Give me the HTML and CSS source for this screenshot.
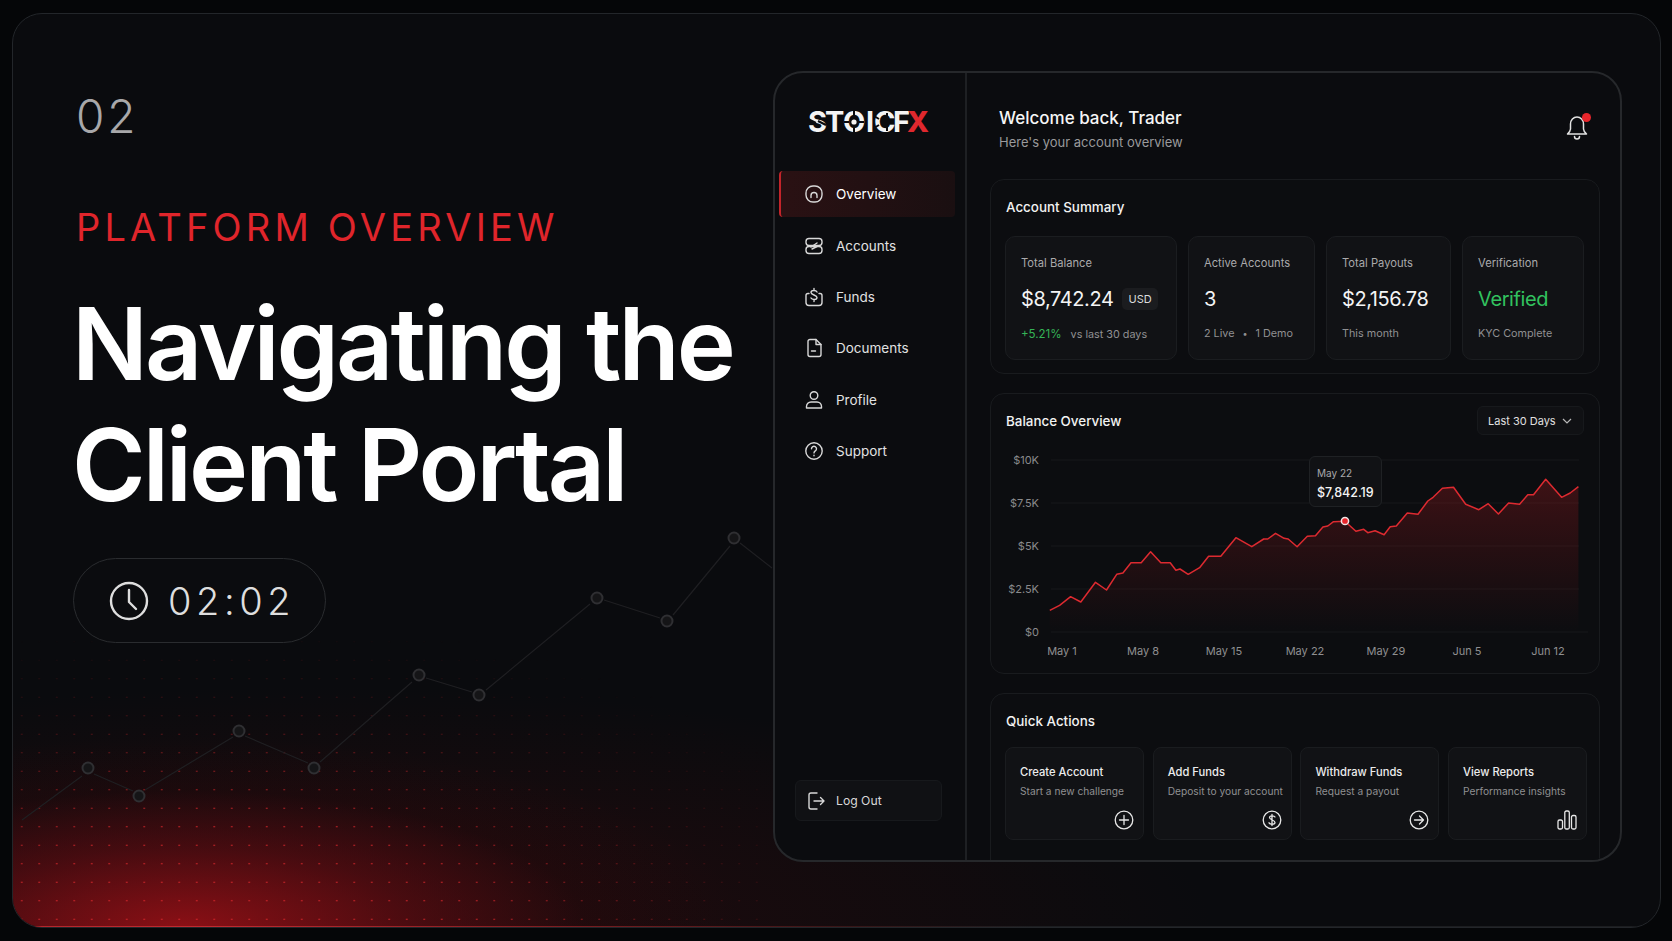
FILE: index.html
```html
<!DOCTYPE html>
<html lang="en">
<head>
<meta charset="utf-8">
<title>Platform Overview</title>
<link rel="stylesheet" href="styles.css">
</head>
<body>
<div class="frame">
  <div class="glow"></div>
  <div class="dots"></div>
  <div class="edge"></div>
  <svg class="decor" width="800" height="500" viewBox="0 450 800 500">
    <path class="decor-line" d="M22 820L82 776M94 774L133 791M145 790L233 737M245 736L308 763M320 762L412 682M426 678L472 692M486 690L590 604M604 600L660 618M673 615L730 546M740 543L772 568"/>
    <g class="decor-node">
      <circle cx="88" cy="768" r="5.5"/><circle cx="139" cy="796" r="5.5"/><circle cx="239" cy="731" r="5.5"/><circle cx="314" cy="768" r="5.5"/><circle cx="419" cy="675" r="5.5"/><circle cx="479" cy="695" r="5.5"/><circle cx="597" cy="598" r="5.5"/><circle cx="667" cy="621" r="5.5"/><circle cx="734" cy="538" r="5.5"/>
    </g>
  </svg>

  <section class="intro">
    <div class="num">02</div>
    <div class="kicker">PLATFORM OVERVIEW</div>
    <h1 class="headline">Navigating the<br>Client Portal</h1>
    <div class="pill">
      <svg class="pill-icon" width="40" height="40" viewBox="0 0 40 40"><circle cx="20" cy="20" r="18"/><path d="M20 9v12l7 7"/></svg>
      <span>02:02</span>
    </div>
  </section>

  <section class="panel">
    <aside class="sidebar">
      <svg class="logo" width="122" height="24" viewBox="0 0 122 24">
        <text class="logo-w" x="0 17 35 58 66 85" y="22">STOICF</text>
        <text class="logo-r" x="99" y="22">X</text>
        <g class="logo-cut">
          <path d="M0 9L8 13M10 11L18 15"/>
          <path d="M46 1V6M46 18V23M36 12H41M51 12H56"/>
          <path d="M66 6L71 9M66 18L71 15M79 3V8M79 16V21"/>
        </g>
        <circle class="logo-dot" cx="46" cy="12" r="2.6"/>
      </svg>
      <nav class="nav">
        <a class="nav-item active"><svg class="ico" viewBox="0 0 20 20"><rect x="2" y="2" width="16" height="16" rx="7"/><path d="M7 13.500v-2a3 3 0 0 1 6 0v2"/></svg>Overview</a>
        <a class="nav-item"><svg class="ico" viewBox="0 0 20 20"><rect x="2" y="2.500" width="16" height="7" rx="3"/><rect x="2" y="10.500" width="16" height="7" rx="3"/><path d="M7 11l6-4M8 13l5-2.500"/></svg>Accounts</a>
        <a class="nav-item"><svg class="ico" viewBox="0 0 20 20"><path d="M5 6.500H4a2 2 0 0 0-2 2v7a3 3 0 0 0 3 3h10a3 3 0 0 0 3-3v-7a2 2 0 0 0-2-2h-1"/><path d="M13 5c-1-2-6-2-6 .500S13 8 13 10.500 8 13 7 11M10 1.500v2M10 12.500v2"/></svg>Funds</a>
        <a class="nav-item"><svg class="ico" viewBox="0 0 20 20"><path d="M4 3.500a2 2 0 0 1 2-2h6l5 5v10a2 2 0 0 1-2 2H6a2 2 0 0 1-2-2z"/><path d="M12 1.500v5h5M7.500 13h4"/></svg>Documents</a>
        <a class="nav-item"><svg class="ico" viewBox="0 0 20 20"><circle cx="10" cy="5.500" r="3.800"/><path d="M2.500 18v-1.500a4.500 4.500 0 0 1 4.500-4.500h6a4.500 4.500 0 0 1 4.500 4.500V18z"/></svg>Profile</a>
        <a class="nav-item"><svg class="ico" viewBox="0 0 20 20"><circle cx="10" cy="10" r="8.200"/><path d="M7.500 7.800a2.500 2.500 0 1 1 3.800 2.100c-.9.600-1.300 1-1.300 2M10 14.300v.4"/></svg>Support</a>
      </nav>
      <a class="logout"><svg class="ico" viewBox="0 0 20 20"><path d="M11 2H5a2 2 0 0 0-2 2v12a2 2 0 0 0 2 2h6M8 10h10M14.500 6.500L18 10l-3.500 3.500"/></svg>Log Out</a>
    </aside>

    <main class="main">
      <header class="top">
        <div>
          <div class="welcome">Welcome back, Trader</div>
          <div class="welcome-sub">Here's your account overview</div>
        </div>
        <div class="bell">
          <svg class="bell-icon" width="24" height="26" viewBox="0 0 24 26"><path d="M12 3a6.500 7 0 0 0-6.500 7v5c0 2-1.500 3.500-3 5h19c-1.500-1.500-3-3-3-5v-5A6.500 7 0 0 0 12 3zM9.500 22.500a2.500 2.500 0 0 0 5 0"/></svg>
          <span class="bell-dot"></span>
        </div>
      </header>

      <section class="card summary">
        <h2 class="card-title">Account Summary</h2>
        <div class="stats">
          <div class="stat">
            <div class="stat-label">Total Balance</div>
            <div class="stat-value">$8,742.24<span class="chip">USD</span></div>
            <div class="stat-foot"><span class="up">+5.21%</span>vs last 30 days</div>
          </div>
          <div class="stat">
            <div class="stat-label">Active Accounts</div>
            <div class="stat-value">3</div>
            <div class="stat-foot">2 Live<span class="sep">•</span>1 Demo</div>
          </div>
          <div class="stat">
            <div class="stat-label">Total Payouts</div>
            <div class="stat-value">$2,156.78</div>
            <div class="stat-foot">This month</div>
          </div>
          <div class="stat">
            <div class="stat-label">Verification</div>
            <div class="stat-value ok">Verified</div>
            <div class="stat-foot">KYC Complete</div>
          </div>
        </div>
      </section>

      <section class="card balance">
        <div class="balance-head">
          <h2 class="card-title">Balance Overview</h2>
          <div class="select">Last 30 Days<svg width="10" height="6" viewBox="0 0 10 6"><path d="M1 1l4 4 4-4"/></svg></div>
        </div>
        <div class="chart">
          <div class="y-axis"><span>$10K</span><span>$7.5K</span><span>$5K</span><span>$2.5K</span><span>$0</span></div>
          <svg class="plot" width="543" height="190" viewBox="1045 450 543 190">
            <defs>
              <linearGradient id="area" x1="0" y1="0" x2="0" y2="1">
                <stop offset="0" stop-color="#a81c20" stop-opacity=".32"/>
                <stop offset=".55" stop-color="#8a1519" stop-opacity=".17"/>
                <stop offset="1" stop-color="#8a1519" stop-opacity="0"/>
              </linearGradient>
            </defs>
            <path class="grid" d="M1051 460H1579M1051 503H1579M1051 546H1579M1051 589H1579M1051 632H1588"/>
            <path class="area" d="M1049.800 610.300L1059.600 605.300 1070.600 596.700 1080.800 602 1095.500 582.300 1106.500 590 1116.700 574.300 1122.900 573 1131 562.700 1141.200 562.700 1150.600 551.700 1160.800 562.700 1170.200 562.700 1175.900 570.300 1180 569 1188.200 574.300 1199.600 567.700 1208.600 556.300 1220.800 556.300 1235.900 537.700 1251.800 546.700 1263.700 539 1267.800 539 1275.500 533.300 1284.100 538.300 1288.200 539 1297.100 546.700 1307.300 536.300 1315.500 535.700 1322.900 527 1327.800 526 1333.500 521.700 1344.900 521.300 1355.900 531.300 1363.700 529.300 1367.800 532.700 1375.100 530.700 1384.100 534.700 1390.200 526.700 1396.300 526 1407.300 513 1418 514.300 1427.800 501 1433.100 497.300 1442.400 488.300 1453.500 487.300 1465.700 504.300 1478.800 509.700 1488.200 503.700 1498.400 514 1508.600 503 1519.600 504.300 1527.800 494.700 1533.500 494.700 1545.700 479.300 1561.600 497.300 1570.200 493 1578.400 486.700V632H1049.800Z"/>
            <path class="line" d="M1049.800 610.300L1059.600 605.300 1070.600 596.700 1080.800 602 1095.500 582.300 1106.500 590 1116.700 574.300 1122.900 573 1131 562.700 1141.200 562.700 1150.600 551.700 1160.800 562.700 1170.200 562.700 1175.900 570.300 1180 569 1188.200 574.300 1199.600 567.700 1208.600 556.300 1220.800 556.300 1235.900 537.700 1251.800 546.700 1263.700 539 1267.800 539 1275.500 533.300 1284.100 538.300 1288.200 539 1297.100 546.700 1307.300 536.300 1315.500 535.700 1322.900 527 1327.800 526 1333.500 521.700 1344.900 521.300 1355.900 531.300 1363.700 529.300 1367.800 532.700 1375.100 530.700 1384.100 534.700 1390.200 526.700 1396.300 526 1407.300 513 1418 514.300 1427.800 501 1433.100 497.300 1442.400 488.300 1453.500 487.300 1465.700 504.300 1478.800 509.700 1488.200 503.700 1498.400 514 1508.600 503 1519.600 504.300 1527.800 494.700 1533.500 494.700 1545.700 479.300 1561.600 497.300 1570.200 493 1578.400 486.700"/>
            <circle class="marker" cx="1345" cy="521" r="3.600"/>
          </svg>
          <div class="tooltip"><div class="tip-date">May 22</div><div class="tip-val">$7,842.19</div></div>
          <div class="x-axis"><span>May 1</span><span>May 8</span><span>May 15</span><span>May 22</span><span>May 29</span><span>Jun 5</span><span>Jun 12</span></div>
        </div>
      </section>

      <section class="card quick">
        <h2 class="card-title">Quick Actions</h2>
        <div class="tiles">
          <div class="tile">
            <div class="tile-title">Create Account</div>
            <div class="tile-sub">Start a new challenge</div>
            <svg class="tile-icon" viewBox="0 0 20 20"><circle cx="10" cy="10" r="8.800"/><path d="M10 5.500v9M5.500 10h9"/></svg>
          </div>
          <div class="tile">
            <div class="tile-title">Add Funds</div>
            <div class="tile-sub">Deposit to your account</div>
            <svg class="tile-icon" viewBox="0 0 20 20"><circle cx="10" cy="10" r="8.800"/><path d="M13 7c-.8-1.600-5.500-1.800-5.500.6S13 10 13 12.400 8 14.500 7 12.800M10 4.500v11"/></svg>
          </div>
          <div class="tile">
            <div class="tile-title">Withdraw Funds</div>
            <div class="tile-sub">Request a payout</div>
            <svg class="tile-icon" viewBox="0 0 20 20"><circle cx="10" cy="10" r="8.800"/><path d="M5.500 10h9M10.500 6l4 4-4 4"/></svg>
          </div>
          <div class="tile">
            <div class="tile-title">View Reports</div>
            <div class="tile-sub">Performance insights</div>
            <svg class="tile-icon" viewBox="0 0 20 20"><rect x="1" y="10" width="4.500" height="9" rx="1.500"/><rect x="7.800" y="1" width="4.500" height="18" rx="1.500"/><rect x="14.500" y="5.500" width="4.500" height="13.500" rx="1.500"/></svg>
          </div>
        </div>
      </section>
    </main>
  </section>
</div>
</body>
</html>
```
FILE: styles.css
```css
* { box-sizing: border-box; }
html, body { margin: 0; height: 941px; overflow: hidden; }
body { background: #050608; padding: 13px 11px 13px 12px; font-family: Inter, "Noto Sans", sans-serif; color: #fff; }
h1, h2 { margin: 0; }

.frame { position: relative; height: 915px; display: flex; justify-content: space-between; border: 1px solid #23262a; border-radius: 30px; background: #0a0b0e; overflow: hidden; }
.glow { position: absolute; inset: 0; background: radial-gradient(560px 190px at 170px 100%, rgba(150,16,22,.9), rgba(105,12,18,.55) 42%, rgba(50,8,10,.25) 72%, transparent 100%), radial-gradient(900px 240px at 300px 100%, rgba(60,10,12,.5), transparent 100%); }
.dots { position: absolute; left: 0; top: 600px; width: 760px; height: 315px; background-image: radial-gradient(circle, rgba(220,40,45,.85) .8px, transparent 1.1px); background-size: 17.500px 18.500px; -webkit-mask-image: radial-gradient(640px 310px at 30% 100%, #000 35%, rgba(0,0,0,.3) 70%, transparent 100%); mask-image: radial-gradient(640px 310px at 30% 100%, #000 35%, rgba(0,0,0,.3) 70%, transparent 100%); }
.edge { position: absolute; left: 0; right: 0; bottom: -1px; height: 2px; background: linear-gradient(90deg, #b3252b 0, #c22a30 12%, #8a1e22 30%, #3a1517 50%, #1c1d20 62%); }
.decor { position: absolute; left: -13px; top: 436px; }
.decor-line { fill: none; stroke: #1f1f22; stroke-width: 1.200; }
.decor-node { fill: #151517; stroke: #2f2f32; stroke-width: 2; }

.intro { position: relative; padding: 79px 0 0 64px; }
.num { font-size: 46px; line-height: 46px; font-weight: 300; color: #a8a8aa; letter-spacing: .06em; margin-left: -1px; }
.kicker { margin: 69px 0 0 -1px; font-size: 38px; line-height: 38px; font-weight: 400; color: #e0252b; letter-spacing: .11em; white-space: nowrap; }
.headline { margin: 37px 0 0 -5px; font-size: 100px; line-height: 121px; font-weight: 600; letter-spacing: -.03em; color: #fff; white-space: nowrap; }
.pill { margin: 33px 0 0 -4px; width: 253px; height: 85px; display: flex; align-items: center; gap: 19px; padding-left: 35px; border: 1px solid #2a2c2f; border-radius: 43px; background: #0b0c0f; color: #dedede; font-size: 38px; font-weight: 300; letter-spacing: .12em; }
.pill-icon { fill: none; stroke: #dedede; stroke-width: 2.400; stroke-linecap: round; stroke-linejoin: round; flex: none; }

.panel { position: relative; flex: none; width: 849px; height: 791px; margin: 57px 38px 0 0; display: flex; border: 2px solid #26282b; border-radius: 30px; background: #0b0c0f; overflow: hidden; }

.sidebar { flex: none; width: 192px; display: flex; flex-direction: column; border-right: 2px solid #1e2023; padding: 37px 0 39px 4px; }
.logo { display: block; margin-left: 29px; overflow: visible; }
.logo-w { font-size: 29px; font-weight: 700; fill: #f4f4f4; }
.logo-r { font-size: 29px; font-weight: 800; fill: #e0282e; }
.logo-cut { fill: none; stroke: #0b0c0f; stroke-width: 2; }
.logo-dot { fill: #f4f4f4; }
.nav { margin-top: 37px; display: flex; flex-direction: column; gap: 6.300px; }
.nav-item { height: 45px; width: 176px; display: flex; align-items: center; gap: 12px; padding-left: 25px; font-size: 13.500px; color: #e2e2e2; border-radius: 4px; }
.nav-item.active { height: 46px; background: linear-gradient(90deg, #2a1113, #1a0f11); border-left: 2px solid #c3242a; padding-left: 23px; color: #fff; }
.ico { width: 20px; height: 20px; flex: none; fill: none; stroke: #d8d8d8; stroke-width: 1.400; stroke-linecap: round; stroke-linejoin: round; }
.logout { margin: auto 0 0 16px; width: 147px; height: 41px; display: flex; align-items: center; gap: 10px; padding-left: 10px; border: 1px solid #17191c; border-radius: 6px; background: #101114; font-size: 12.200px; color: #d8d8d8; }

.main { flex: 1; min-width: 0; padding: 0 20px 0 23px; display: flex; flex-direction: column; gap: 19px; }
.top { flex: none; height: 87px; display: flex; justify-content: space-between; padding: 33px 11px 0 9px; }
.welcome { font-size: 17px; line-height: 24px; font-weight: 500; color: #f6f6f6; }
.welcome-sub { margin-top: 2px; font-size: 13px; line-height: 20px; color: #9a9a9c; }
.bell { position: relative; width: 24px; height: 26px; margin-top: 8px; }
.bell-icon { fill: none; stroke: #e2e2e2; stroke-width: 1.500; stroke-linejoin: round; stroke-linecap: round; display: block; }
.bell-dot { position: absolute; top: -1px; right: -2px; width: 9px; height: 9px; border-radius: 50%; background: #e8262c; }

.card { flex: none; border: 1px solid #191b1e; border-radius: 14px; background: #0c0d10; }
.card-title { font-size: 13.400px; line-height: 20px; font-weight: 500; color: #f2f2f2; }

.summary { height: 195px; padding: 17px 0 0 15px; }
.stats { margin-top: 19px; display: grid; grid-template-columns: 172px 127px 125px 122px; gap: 11px; margin-left: -1px; }
.stat { height: 124px; padding: 17px 0 0 15px; border: 1px solid #1b1d20; border-radius: 10px; background: #111215; }
.stat-label { font-size: 11.200px; line-height: 18px; color: #aaaaac; }
.stat-value { margin-top: 12px; font-size: 20px; line-height: 30px; letter-spacing: -.02em; color: #f4f4f4; display: flex; align-items: center; white-space: nowrap; }
.stat-value.ok { color: #32c25f; }
.chip { margin-left: 9px; padding: 0 6px; height: 22px; line-height: 22px; border-radius: 5px; background: #1b1c1f; font-size: 11px; letter-spacing: 0; color: #dcdcdc; }
.stat-foot { margin-top: 12px; font-size: 10.800px; line-height: 16px; color: #909092; white-space: nowrap; }
.up { font-size: 11.500px; color: #35b457; margin-right: 9px; }
.sep { margin: 0 8px; font-size: 9px; }

.balance { height: 281px; padding: 12px 15px 0 14px; }
.balance-head { display: flex; justify-content: space-between; align-items: center; height: 29px; padding-left: 1px; }
.select { width: 107px; height: 29px; display: flex; align-items: center; justify-content: space-between; padding: 0 11px 0 10px; border: 1px solid #17191c; border-radius: 6px; background: #101114; font-size: 11px; color: #e0e0e0; }
.select svg { fill: none; stroke: #b8b8b8; stroke-width: 1.200; }
.chart { position: relative; margin-top: 15px; display: grid; grid-template-columns: 34px minmax(0, 1fr); column-gap: 6px; }
.y-axis { padding-top: 3px; display: flex; flex-direction: column; align-items: flex-end; gap: 29px; font-size: 11px; line-height: 14px; color: #8a8a8c; }
.plot { display: block; overflow: visible; }
.grid { stroke: #17181b; stroke-width: 1; fill: none; }
.area { fill: url(#area); }
.line { fill: none; stroke: #dd2a30; stroke-width: 1.500; stroke-linejoin: round; }
.marker { fill: #e8262c; stroke: #f0e6e6; stroke-width: 1.500; }
.tooltip { position: absolute; left: 304px; top: 6px; width: 73px; height: 51px; padding: 9px 0 0 7px; border: 1px solid #1f2124; border-radius: 6px; background: #111215; }
.tip-date { font-size: 10px; line-height: 14px; color: #a8a8aa; }
.tip-val { margin-top: 4px; font-size: 12.500px; line-height: 18px; font-weight: 500; color: #f4f4f4; }
.x-axis { grid-column: 1 / -1; margin: 4px 0 0 16.500px; display: grid; grid-template-columns: repeat(7, 81px); justify-items: center; font-size: 11px; line-height: 14px; color: #8f8f91; }

.quick { height: 200px; padding: 17px 0 0 15px; }
.tiles { margin: 16px 0 0 -1px; display: grid; grid-template-columns: repeat(4, 139px); gap: 8.700px; }
.tile { position: relative; height: 93px; padding: 15px 0 0 14px; border: 1px solid #1a1c1f; border-radius: 8px; background: #111215; }
.tile-title { font-size: 11.200px; line-height: 18px; font-weight: 500; color: #ececec; }
.tile-sub { margin-top: 2px; font-size: 10.200px; line-height: 16px; color: #909092; white-space: nowrap; }
.tile-icon { position: absolute; right: 9px; bottom: 9px; width: 20px; height: 20px; fill: none; stroke: #e8e8e8; stroke-width: 1.300; stroke-linecap: round; stroke-linejoin: round; }
```
